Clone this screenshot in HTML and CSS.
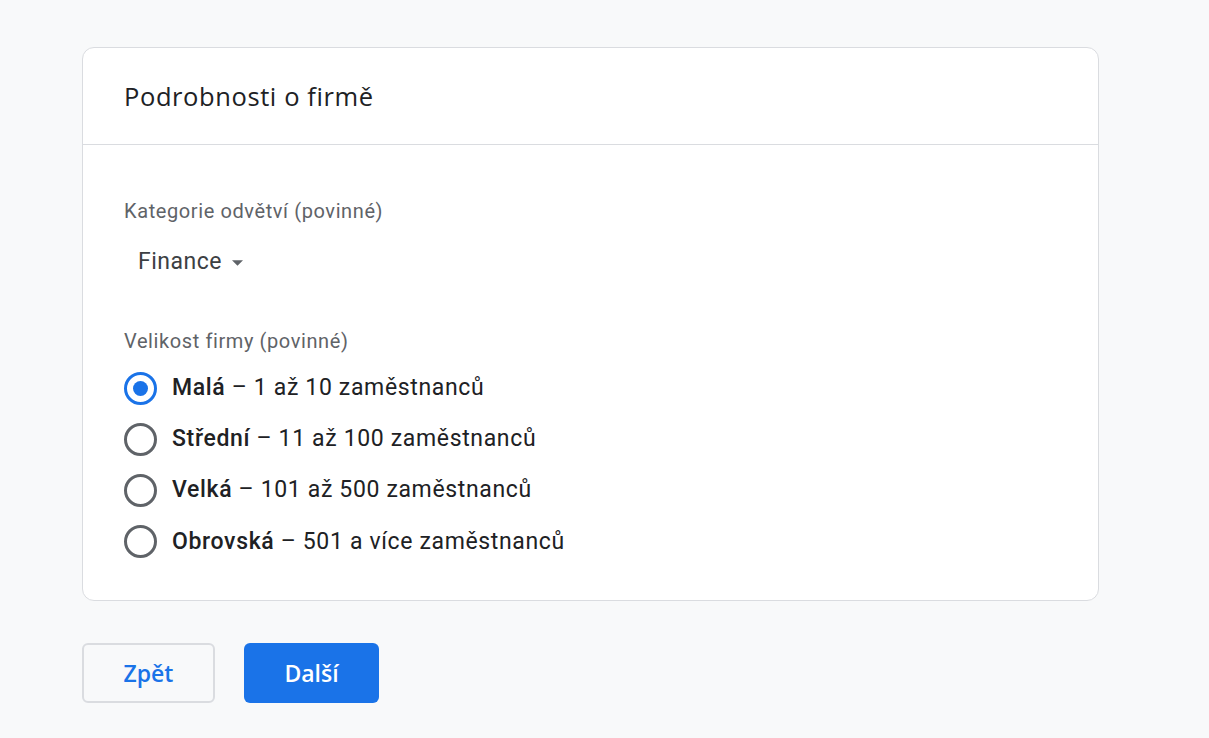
FILE: index.html
```html
<!DOCTYPE html>
<html lang="cs">
<head>
<meta charset="utf-8">
<title>Podrobnosti o firmě</title>
<link rel="stylesheet" href="styles.css">
</head>
<body>
<main class="page">
  <section class="card">
    <header class="card-header">
      <h1 class="card-title">Podrobnosti o firmě</h1>
    </header>
    <div class="card-body">
      <div class="field">
        <div class="field-label">Kategorie odvětví (povinné)</div>
        <div class="select">
          <span>Finance</span>
          <svg class="caret" width="11" height="6" viewBox="0 0 10 5"><path d="M0 0h10L5 5z" fill="#5f6368"/></svg>
        </div>
      </div>
      <div class="field field-size">
        <div class="field-label">Velikost firmy (povinné)</div>
        <ul class="radio-list">
          <li class="radio-item checked"><span class="radio"></span><span class="radio-text"><b>Malá</b> – 1 až 10 zaměstnanců</span></li>
          <li class="radio-item"><span class="radio"></span><span class="radio-text"><b>Střední</b> – 11 až 100 zaměstnanců</span></li>
          <li class="radio-item"><span class="radio"></span><span class="radio-text"><b>Velká</b> – 101 až 500 zaměstnanců</span></li>
          <li class="radio-item"><span class="radio"></span><span class="radio-text"><b>Obrovská</b> – 501 a více zaměstnanců</span></li>
        </ul>
      </div>
    </div>
  </section>
  <div class="actions">
    <button class="btn btn-outline">Zpět</button>
    <button class="btn btn-primary">Další</button>
  </div>
</main>
</body>
</html>
```

FILE: styles.css
```css
html, body {
  margin: 0;
  padding: 0;
  background: #f8f9fa;
}
body {
  font-family: Roboto, "Liberation Sans", sans-serif;
  color: #202124;
}
.page {
  padding: 47px 0 0 82px;
}
.card {
  width: 1015px;
  background: #fff;
  border: 1px solid #dadce0;
  border-radius: 12px;
}
.card-header {
  height: 96px;
  border-bottom: 1px solid #dadce0;
  display: flex;
  align-items: center;
  padding: 0 41px;
}
.card-title {
  margin: 0;
  font-family: "Open Sans", sans-serif;
  font-weight: 400;
  font-size: 25.5px;
  letter-spacing: 0.6px;
  color: #202124;
}
.card-body {
  padding: 54px 41px 41px;
}
.field-label {
  font-size: 20px;
  letter-spacing: 0.6px;
  color: #5f6368;
  line-height: 24px;
}
.select {
  display: flex;
  align-items: center;
  gap: 10px;
  margin-top: 26px;
  padding-left: 14px;
  font-size: 23px;
  letter-spacing: 0.5px;
  line-height: 26px;
  color: #3c4043;
}
.caret {
  margin-top: 2px;
}
.field-size {
  margin-top: 54px;
}
.radio-list {
  list-style: none;
  margin: 18px 0 0;
  padding: 0;
  display: flex;
  flex-direction: column;
  gap: 17.2px;
}
.radio-item {
  display: flex;
  align-items: center;
  gap: 15px;
  height: 34px;
}
.radio {
  box-sizing: border-box;
  width: 33px;
  height: 33px;
  border-radius: 50%;
  border: 3px solid #5f6368;
  display: flex;
  align-items: center;
  justify-content: center;
  flex: none;
}
.checked .radio {
  border-color: #1a73e8;
}
.checked .radio::after {
  content: "";
  width: 15px;
  height: 15px;
  border-radius: 50%;
  background: #1a73e8;
}
.radio-text {
  font-size: 23px;
  letter-spacing: 0.65px;
  color: #202124;
  line-height: 28px;
}
.radio-text b {
  font-weight: 500;
}
.actions {
  display: flex;
  gap: 29px;
  margin-top: 42px;
}
.btn {
  height: 60px;
  border-radius: 6px;
  font-family: "Open Sans", sans-serif;
  font-weight: 600;
  font-size: 23px;
  cursor: pointer;
}
.btn-outline {
  width: 133px;
  background: #f8f9fa;
  border: 2px solid #dadce0;
  color: #1a73e8;
}
.btn-primary {
  width: 135px;
  background: #1a73e8;
  border: none;
  color: #fff;
}
```
